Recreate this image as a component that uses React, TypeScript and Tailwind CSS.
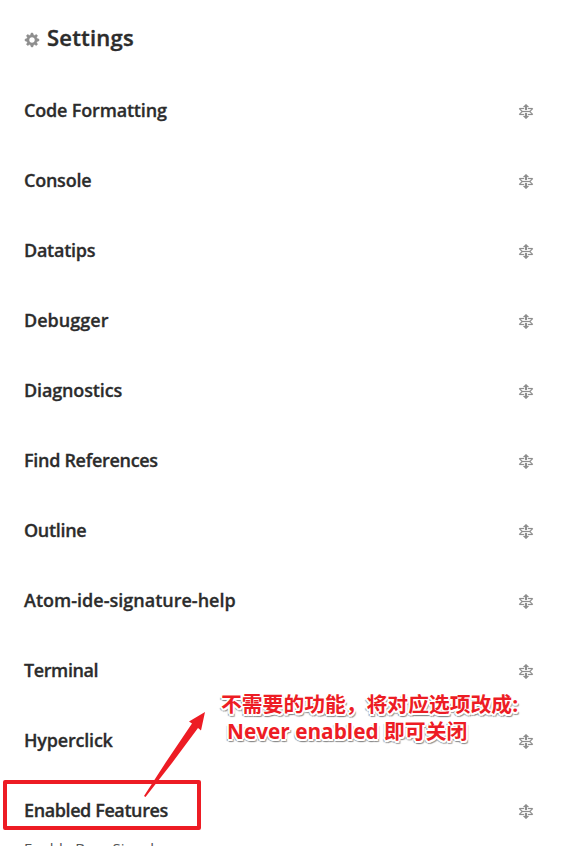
type Section = { title: string; className: string };

const sections: Section[] = [
  { title: 'Code Formatting', className: 'tracking-[-0.17px]' },
  { title: 'Console', className: 'tracking-[-0.24px]' },
  { title: 'Datatips', className: 'tracking-[-0.26px]' },
  { title: 'Debugger', className: 'tracking-[0.02px]' },
  { title: 'Diagnostics', className: 'tracking-[-0.14px]' },
  { title: 'Find References', className: 'tracking-[-0.3px]' },
  { title: 'Outline', className: 'tracking-[-0.32px]' },
  { title: 'Atom-ide-signature-help', className: 'tracking-[0.01px]' },
  { title: 'Terminal', className: 'tracking-[-0.4px]' },
  { title: 'Hyperclick', className: 'tracking-[-0.2px]' },
  { title: 'Enabled Features', className: 'tracking-[-0.4px]' },
];

function GearIcon() {
  return (
    <svg className="h-4 w-[14px] shrink-0 fill-[#8e8e8e] stroke-[#8e8e8e] stroke-[0.5]" viewBox="0 0 14 16" overflow="visible">
      <path
        fillRule="evenodd"
        d="M14 8.77v-1.6l-1.94-.64-.45-1.09.88-1.84-1.13-1.13-1.81.91-1.09-.45-.69-1.92h-1.6l-.63 1.94-1.11.45-1.84-.88-1.13 1.13.91 1.81-.45 1.09L0 7.23v1.59l1.94.64.45 1.09-.88 1.84 1.13 1.13 1.81-.91 1.09.45.69 1.92h1.59l.63-1.94 1.11-.45 1.84.88 1.13-1.13-.92-1.81.47-1.09L14 8.75v.02zM7 11c-1.66 0-3-1.34-3-3s1.34-3 3-3 3 1.34 3 3-1.34 3-3 3z"
      />
    </svg>
  );
}

function UnfoldIcon() {
  return (
    <svg className="mt-[2px] h-4 w-[14px] shrink-0 fill-[#8e8e8e] stroke-[#8e8e8e] stroke-[0.2]" viewBox="0 0 14 16" overflow="visible">
      <path
        fillRule="evenodd"
        d="M11.5 7.5L14 10c0 .55-.45 1-1 1H9v-1h3.5l-2-2h-7l-2 2H5v1H1c-.55 0-1-.45-1-1l2.500-2.500L0 5c0-.55.45-1 1-1h4v1H1.5l2 2h7l2-2H9V4h4c.55 0 1 .45 1 1l-2.500 2.500zM6 6h2V3h2L7 0 4 3h2v3zm2 3H6v3H4l3 3 3-3H8V9z"
      />
    </svg>
  );
}

export default function App() {
  return (
    <main className="relative h-[846px] w-[578px] overflow-hidden bg-white pl-6 font-['Open_Sans','Noto_Sans',sans-serif] text-[#2c2c2c]">
      <h1 className="flex h-[76px] items-center gap-2 pl-px text-[22px] font-semibold">
        <span className="pt-1">
          <GearIcon />
        </span>
        <span className="-mt-[2px] tracking-[0.2px] [-webkit-text-stroke:0.4px_#2c2c2c]">Settings</span>
      </h1>
      {sections.map((s) => (
        <section key={s.title} className="flex h-[70px] items-center justify-between pr-[45px]">
          <h2
            className={`-mt-[2px] text-[18px] leading-6 font-semibold whitespace-nowrap [-webkit-text-stroke:0.3px_#2c2c2c] ${s.className}`}
          >
            {s.title}
          </h2>
          <UnfoldIcon />
        </section>
      ))}
      <p className="-mt-[8px] text-[15px] leading-5 whitespace-nowrap text-[#555]">Enable Busy Signal</p>

      <div className="absolute top-[780px] left-[3px] h-[50px] w-[198px] rounded-[2px] border-4 border-[#ed1c24]" />
      <svg className="absolute top-[700px] left-[130px] fill-[#ed1c24]" width="90" height="110" viewBox="0 0 90 110">
        <path d="M14 96L36 62L62 23.500L59 21.500L75 12L71 30.500L68 28L42 63L15.500 97Z" />
      </svg>
      <div className="absolute top-[691px] left-[221px] font-['Open_Sans','Noto_Sans_CJK_SC',sans-serif] text-[20.800px] leading-[27px] font-bold whitespace-pre text-[#ed1c24] [text-shadow:-1px_-1px_0_#fff,1px_-1px_0_#fff,-2px_0_0_#fff,2px_0_0_#fff,-1px_2px_0_#fff,1px_2px_0_#fff,0_2px_0_#fff,-2px_2px_1px_#999,0_3px_1px_#888,2px_3px_1px_#999]">
        <div>不需要的功能，将对应选项改成:</div>
        <div className="pl-[6px]">Never enabled 即可关闭</div>
      </div>
    </main>
  );
}
